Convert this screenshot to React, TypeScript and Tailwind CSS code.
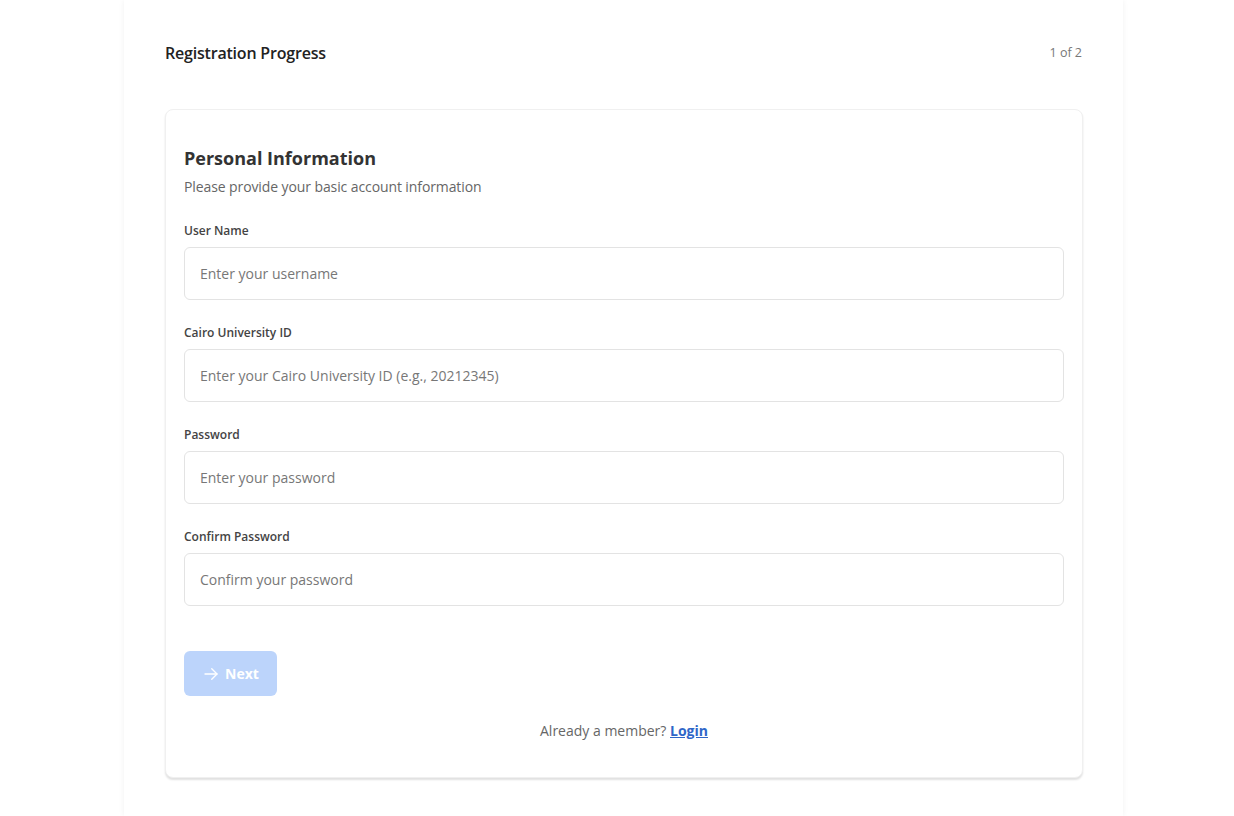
import React from "react";

function Field({ label, placeholder, type = "text" }: { label: string; placeholder: string; type?: string }) {
  return (
    <div className="flex flex-col">
      <label className="text-[12px] font-semibold text-[#444] leading-[18px] mb-[7px]">{label}</label>
      <input
        type={type}
        placeholder={placeholder}
        className="h-[53px] w-full rounded-[6px] border border-[#e3e3e3] bg-white px-[15px] text-[14px] text-[#333] placeholder:text-[#777] outline-none"
      />
    </div>
  );
}

export default function App() {
  return (
    <div className="min-h-[816px] bg-white" style={{ fontFamily: '"Open Sans", "Noto Sans", sans-serif' }}>
      <div className="ml-[124px] w-[999px] min-h-[816px] bg-white shadow-[0_0_6px_rgba(0,0,0,0.06)] px-[41px] pt-[42px]">
        <div className="flex items-center justify-between h-[22px]">
          <h2 className="text-[16px] font-semibold text-[#222] tracking-[-0.2px]">Registration Progress</h2>
          <span className="text-[12.5px] text-[#777]">1 of 2</span>
        </div>
        <div className="mt-[45px] w-[918px] rounded-[8px] border border-[#f0f0f0] bg-white shadow-[0_2px_2px_rgba(0,0,0,0.12)] px-[18px] pt-[35px] pb-[36px]">
          <h3 className="text-[18px] font-bold text-[#333] leading-[26px]">Personal Information</h3>
          <p className="mt-[6px] text-[14px] text-[#666] leading-[20px] tracking-[-0.1px]">Please provide your basic account information</p>
          <div className="mt-[25px] flex flex-col gap-[24px]">
            <Field label="User Name" placeholder="Enter your username" />
            <Field label="Cairo University ID" placeholder="Enter your Cairo University ID (e.g., 20212345)" />
            <Field label="Password" placeholder="Enter your password" type="password" />
            <Field label="Confirm Password" placeholder="Confirm your password" type="password" />
          </div>
          <button className="mt-[45px] flex h-[45px] w-[93px] items-center justify-center gap-[5px] rounded-[6px] bg-[#bcd4fb] text-[14px] font-bold text-white">
            <svg width="18" height="18" viewBox="0 0 24 24" fill="none" stroke="currentColor" strokeWidth="1.8" strokeLinecap="round" strokeLinejoin="round">
              <path d="M4 12h16" />
              <path d="M13 5l7 7-7 7" />
            </svg>
            Next
          </button>
          <p className="mt-[25px] text-center text-[14px] text-[#666] leading-[20px]">
            Already a member?{" "}
            <a href="#" className="font-bold text-[#2f66c8] underline">Login</a>
          </p>
        </div>
      </div>
    </div>
  );
}
